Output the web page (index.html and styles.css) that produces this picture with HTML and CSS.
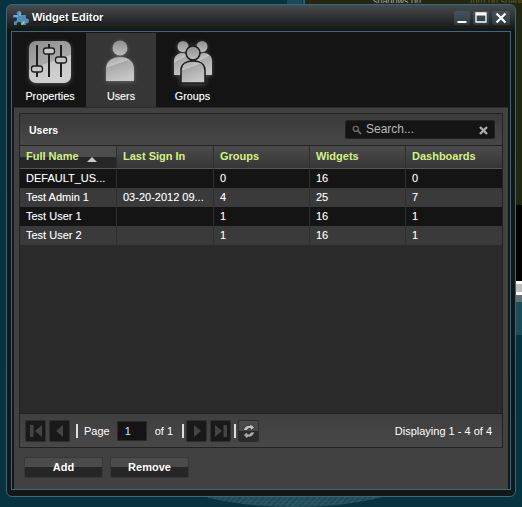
FILE: index.html
```html
<!DOCTYPE html>
<html lang="en">
<head>
<meta charset="utf-8">
<title>Widget Editor</title>
<link rel="stylesheet" href="styles.css">
</head>
<body>
<div class="desk-hatch"></div>
<div class="desk-arc"></div>
<div class="desk-olive"><span class="desk-text t1">shadows on</span><span class="desk-text t2">turn on shadows if you</span></div>
<div class="desk-band"></div>
<div class="window">
  <header class="titlebar">
    <svg class="app-icon" width="17" height="17" viewBox="0 0 17 17"><path d="M1 6h4c-1-2 0-4 2-4s3 2 2 4h5v4c2-1 3 0 3 2s-2 3-3 2v2H9c1-2-1-3-2-3s-3 1-2 3H2v-4c1 1 3 0 3-2S2 8 1 9z" fill="#4c8dbd"/><path d="M2 7h4M8 3v4" stroke="#9cc6e4" stroke-width="1"/><path d="M9 15l3-3 1 1-3 3z" fill="#c4d24e"/></svg>
    <span class="title">Widget Editor</span>
    <div class="win-buttons">
      <button class="win-btn" aria-label="Minimize"><svg width="16" height="14" viewBox="0 0 16 14"><rect x="3.500" y="10" width="9" height="2" fill="#fff"/></svg></button>
      <button class="win-btn" aria-label="Maximize"><svg width="16" height="14" viewBox="0 0 16 14"><path d="M3 2h10v9H3z" fill="none" stroke="#fff" stroke-width="1.300"/><rect x="3" y="2" width="10" height="2.500" fill="#fff"/></svg></button>
      <button class="win-btn win-close" aria-label="Close"><svg width="16" height="14" viewBox="0 0 16 14"><path d="M3.500 2.500l9 9M12.500 2.500l-9 9" stroke="#fff" stroke-width="2.300"/></svg></button>
    </div>
  </header>
  <div class="frame">
    <nav class="tabs">
      <div class="tab tab-props">
        <svg width="44" height="44" viewBox="0 0 44 44"><defs><linearGradient id="g1" x1="0" y1="0" x2="0.350" y2="1"><stop offset="0" stop-color="#8e8e8e"/><stop offset="0.600" stop-color="#aaaaaa"/><stop offset="0.610" stop-color="#c6c6c6"/><stop offset="1" stop-color="#d0d0d0"/></linearGradient><linearGradient id="g2" x1="0" y1="0" x2="0.400" y2="1"><stop offset="0" stop-color="#9e9e9e"/><stop offset="0.380" stop-color="#c4c4c4"/><stop offset="0.390" stop-color="#a8a8a8"/><stop offset="1" stop-color="#c6c6c6"/></linearGradient><linearGradient id="g3" x1="0" y1="0" x2="0" y2="1"><stop offset="0" stop-color="#8e8e8e"/><stop offset="1" stop-color="#bdbdbd"/></linearGradient></defs><rect x="1" y="1" width="42" height="42" rx="7" fill="url(#g1)"/><g stroke="#1d1d1d" stroke-width="2" fill="none"><path d="M9 5v32M21 4v33M33 5v32"/></g><g fill="#c8c8c8" stroke="#1d1d1d" stroke-width="1.300"><rect x="3.500" y="26" width="11" height="6" rx="2.500"/><rect x="15.500" y="8" width="11" height="6" rx="2.500"/><rect x="27.500" y="17" width="11" height="6" rx="2.500"/></g></svg>
        <span>Properties</span>
      </div>
      <div class="tab tab-users active">
        <svg width="44" height="44" viewBox="0 0 44 44"><circle cx="21" cy="8" r="7.500" fill="url(#g3)"/><path d="M7 41V29c0-8 6-12 14-12s14 4 14 12v12z" fill="url(#g2)"/></svg>
        <span>Users</span>
      </div>
      <div class="tab tab-groups">
        <svg width="38" height="44" viewBox="0 0 38 44"><circle cx="9" cy="6.500" r="5.500" fill="url(#g3)"/><circle cx="28" cy="6.500" r="5.500" fill="url(#g3)"/><path d="M0 35V21c0-5 4-8 8-8s8 3 8 8v14z" fill="url(#g2)"/><path d="M22 35V21c0-5 4-8 8-8s8 3 8 8v14z" fill="url(#g2)"/><circle cx="19" cy="13" r="7" fill="url(#g3)" stroke="#1b1b1b" stroke-width="1.500"/><path d="M7 43V30c0-6 5-9 12-9s12 3 12 9v13z" fill="url(#g2)" stroke="#1b1b1b" stroke-width="1.500"/></svg>
        <span>Groups</span>
      </div>
    </nav>
    <main class="tab-body">
      <section class="panel">
        <div class="panel-head">
          <span class="panel-title">Users</span>
          <div class="search">
            <svg width="10" height="10" viewBox="0 0 10 10"><circle cx="3.800" cy="3.800" r="2.600" fill="none" stroke="#777" stroke-width="1.100"/><path d="M5.800 5.800L9 9" stroke="#777" stroke-width="1.600"/></svg>
            <span class="search-text">Search...</span>
            <svg class="search-x" width="9" height="9" viewBox="0 0 9 9"><path d="M1 1l7 7M8 1L1 8" stroke="#aaa" stroke-width="2.400"/></svg>
          </div>
        </div>
        <table class="grid">
          <thead>
            <tr><th class="sorted">Full Name <svg class="sort" width="10" height="5" viewBox="0 0 10 5"><path d="M5 0l5 5H0z" fill="#c9c9c9"/></svg></th><th>Last Sign In</th><th>Groups</th><th>Widgets</th><th>Dashboards</th></tr>
          </thead>
          <tbody>
            <tr class="odd"><td>DEFAULT_US...</td><td></td><td>0</td><td>16</td><td>0</td></tr>
            <tr class="even"><td>Test Admin 1</td><td>03-20-2012 09...</td><td>4</td><td>25</td><td>7</td></tr>
            <tr class="odd"><td>Test User 1</td><td></td><td>1</td><td>16</td><td>1</td></tr>
            <tr class="even"><td>Test User 2</td><td></td><td>1</td><td>16</td><td>1</td></tr>
          </tbody>
        </table>
        <div class="grid-fill"></div>
        <div class="pager">
          <button class="pg-btn pg-first" aria-label="First"><svg width="14" height="14" viewBox="0 0 14 14"><path d="M1 1h3.500v12H1zM13 1v12L6 7z" fill="#444"/></svg></button>
          <button class="pg-btn" aria-label="Previous"><svg width="14" height="14" viewBox="0 0 14 14"><path d="M10 1v12L3 7z" fill="#444"/></svg></button>
          <i class="sep"></i>
          <span class="pg-label">Page</span>
          <span class="pg-input">1</span>
          <span class="pg-of">of 1</span>
          <i class="sep sep-b"></i>
          <button class="pg-btn pg-first" aria-label="Next"><svg width="14" height="14" viewBox="0 0 14 14"><path d="M4 1v12l7-6z" fill="#444"/></svg></button>
          <button class="pg-btn" aria-label="Last"><svg width="14" height="14" viewBox="0 0 14 14"><path d="M1 1v12l7-6zM9.500 1H13v12H9.500z" fill="#444"/></svg></button>
          <i class="sep sep-c"></i>
          <button class="pg-btn refresh" aria-label="Refresh"><svg width="18" height="18" viewBox="0 0 18 18"><path d="M3.500 8.500C4 5 7 3 10 3.500l.5-1.500 4 3.500-3.500 3-.5-2C9 6 7.500 7 7 8.500z" fill="#c4c4c4" stroke="#1c1c1c" stroke-width=".6"/><path d="M14.500 10c-.5 3.500-3.500 5.500-6.500 5l-1 1.500-3.500-3.500L7 10l.5 2c1.500.5 3-.5 3.500-2z" fill="#a8a8a8" stroke="#1c1c1c" stroke-width=".6"/></svg></button>
          <span class="pg-display">Displaying 1 - 4 of 4</span>
        </div>
      </section>
      <div class="actions">
        <button class="act">Add</button>
        <button class="act">Remove</button>
      </div>
    </main>
  </div>
</div>
</body>
</html>
```
FILE: styles.css
```css
* { box-sizing: border-box; }
html, body { height: 100%; }
body {
  margin: 0;
  width: 522px;
  height: 507px;
  overflow: hidden;
  position: relative;
  background: #07323f;
  font-family: "Liberation Sans", Arial, sans-serif;
  padding: 4px 6px 0;
}
.desk-hatch {
  position: absolute;
  left: 0;
  top: 0;
  width: 302px;
  height: 20px;
  background: linear-gradient(90deg, #07323f 0, #07323f 95%, #1c4a5a 95%);
}
.desk-arc {
  position: absolute;
  left: 165px;
  top: 470px;
  width: 258px;
  height: 37px;
  border-radius: 0 0 130px 130px / 0 0 37px 37px;
  background: repeating-linear-gradient(135deg, #1d4b58 0 2px, #28545f 2px 4px);
}
.desk-olive {
  position: absolute;
  right: 0;
  top: 0;
  width: 219px;
  height: 205px;
  background: #232611;
  border-left: 2px solid #1c6478;
}
.desk-text {
  position: absolute;
  top: -2px;
  font-size: 9px;
  line-height: 7px;
  height: 5px;
  overflow: hidden;
  white-space: nowrap;
}
.t1 { left: 68px; color: #aaa; }
.t2 { left: 165px; color: #5d6330; }
.desk-band {
  position: absolute;
  right: 0;
  top: 205px;
  width: 6px;
  height: 130px;
  background: linear-gradient(#000 0, #000 76px, #fff 76px, #fff 79px, #bdbdbd 79px, #bdbdbd 87px, #fff 87px, #fff 90px, #5c7076 90px, #5c7076 97px, #1d4b58 97px);
}
.window {
  position: relative;
  width: 510px;
  height: 493px;
  border: 1px solid #2f6d80;
  border-radius: 6px;
  padding: 0 4px 6px;
  display: flex;
  flex-direction: column;
  background: linear-gradient(#484b4e, #131313 26px, #161616);
}
.titlebar {
  height: 26px;
  display: flex;
  align-items: center;
  padding: 0 0 2px 1px;
  flex: none;
}
.title {
  margin-left: 3px;
  color: #fff;
  font-weight: bold;
  font-size: 11px;
  text-shadow: 0 1px 1px #000;
}
.win-buttons { margin-left: auto; display: flex; gap: 3px; margin-right: 1px; margin-top: 2px; }
.win-btn {
  width: 16px;
  height: 14px;
  padding: 0;
  border: 0;
  border-radius: 2px;
  background: linear-gradient(#45535a, #2e3a40);
  display: flex;
  align-items: center;
  justify-content: center;
}
.win-close { width: 18px; }
.frame {
  flex: 1;
  border: 1px solid #2f6d80;
  background: #161616;
  padding: 1px 2px 0;
  display: flex;
  flex-direction: column;
  min-height: 0;
}
.tabs { display: flex; height: 74px; flex: none; background: #141414; }
.tab {
  display: flex;
  flex-direction: column;
  align-items: center;
  color: #fff;
  font-size: 10.800px;
  padding-top: 7px;
  text-shadow: 0 0 1px rgba(255, 255, 255, .35);
}
.tab svg { flex: none; filter: drop-shadow(0 1px 2px rgba(255, 255, 255, .25)); }
.tab span { margin-top: 6px; line-height: 13px; }
.tab-props { width: 72px; }
.tab-users { width: 70px; background: #363636; }
.tab-groups { width: 73px; }
.tab-body {
  flex: 1;
  background: #414141;
  border-top: 1px solid #2b2b2b;
  padding: 5px 5px 0;
  display: flex;
  flex-direction: column;
  min-height: 0;
}
.panel {
  border: 1px solid #222;
  height: 335px;
  display: flex;
  flex-direction: column;
  flex: none;
  width: 484px;
  background: #2a2a2a;
}
.panel-head {
  height: 32px;
  flex: none;
  display: flex;
  align-items: center;
  justify-content: space-between;
  padding: 0 7px 0 9px;
  background: linear-gradient(#3a3a3a, #474747);
  border-bottom: 1px solid #222;
}
.panel-title { color: #fff; font-weight: bold; font-size: 10.500px; margin-top: 1px; }
.search {
  width: 150px;
  height: 19px;
  background: #141414;
  border: 1px solid #222;
  border-radius: 2px;
  display: flex;
  align-items: center;
  padding: 0 6px;
  color: #b9b9b9;
  font-size: 12px;
}
.search-text { margin-left: 4px; margin-top: -1px; }
.search-x { margin-left: auto; margin-top: 1px; }
.grid { width: 100%; border-collapse: separate; border-spacing: 0; table-layout: fixed; flex: none; }
.grid th:nth-child(1), .grid th:nth-child(2) { width: 97px; }
.grid th {
  height: 23px;
  background: linear-gradient(#4b4b4b, #363636);
  border-right: 1px solid #2e2e2e;
  border-bottom: 1px solid #555;
  color: #d2f282;
  font-size: 11px;
  font-weight: bold;
  text-align: left;
  padding: 0 6px 3px;
  white-space: nowrap;
}
.grid th.sorted { background: linear-gradient(#4d4d4d 0, #4d4d4d 50%, #272727 50%, #272727); }
.sort { margin-left: 5px; vertical-align: -2px; }
.grid td {
  height: 19px;
  font-size: 11px;
  color: #fff;
  padding: 0 6px 2px;
  border-right: 1px solid #2e2e2e;
  white-space: nowrap;
  overflow: hidden;
  text-shadow: 0 0 1px rgba(255, 255, 255, .3);
}
.grid th:last-child, .grid td:last-child { border-right: 0; }
.odd { background: #141414; }
.even { background: #3a3a3a; }
.grid-fill { flex: 1; border-bottom: 1px solid #222; background: #2a2a2a; }
.pager {
  height: 33px;
  flex: none;
  display: flex;
  align-items: center;
  padding: 0 10px 0 5px;
  background: linear-gradient(#3f3f3f, #474747);
  color: #fff;
  font-size: 11px;
}
.pg-btn {
  width: 21px;
  height: 22px;
  padding: 0;
  background: #191919;
  border: 1px solid #2e2e2e;
  border-radius: 2px;
  display: flex;
  align-items: center;
  justify-content: center;
}
.pg-first { margin-right: 3px; }
.refresh { background: linear-gradient(#4a4a4a 0, #4a4a4a 50%, #2b2b2b 50%); }
.sep { width: 2px; height: 14px; background: #ddd; margin: 0 5px 0 6px; }
.sep-b { margin: 0 2px 0 9px; }
.sep-c { margin: 0 2px 0 3px; }
.pg-label { margin-left: 1px; }
.pg-input {
  width: 30px;
  height: 20px;
  margin-left: 7px;
  background: #141414;
  border: 1px solid #2a2a2a;
  padding: 3px 0 0 7px;
  color: #cfe3ff;
}
.pg-of { margin-left: 8px; }
.pg-display { margin-left: auto; }
.actions { display: flex; gap: 7px; padding: 9px 0 0 5px; }
.act {
  width: 79px;
  height: 21px;
  padding: 0 0 2px;
  background: linear-gradient(#4b4b4b 0, #4b4b4b 45%, #262626 45%, #262626);
  border: 1px solid #383838;
  border-radius: 2px;
  color: #fff;
  font-family: inherit;
  font-weight: bold;
  font-size: 11px;
}
```
